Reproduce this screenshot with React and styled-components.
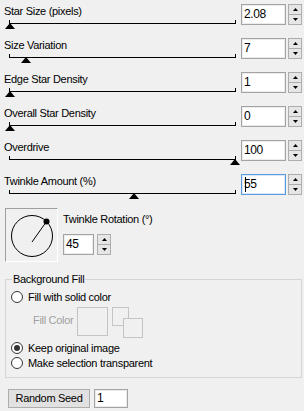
import React from 'react';
import styled, { createGlobalStyle } from 'styled-components';

const Global = createGlobalStyle`
  html, body { margin: 0; padding: 0; background: #f0f0f0; }
  body { font-family: "Liberation Sans", Arial, sans-serif; }
`;

const Page = styled.div`
  width: 304px;
  height: 411px;
  overflow: hidden;
  background: #f0f0f0;
  color: #000;
  font-family: "Liberation Sans", Arial, sans-serif;
  font-size: 11px;
  letter-spacing: -0.3px;
  display: flex;
  flex-direction: column;
`;

const Row = styled.div`
  display: flex;
  align-items: flex-start;
  height: 34px;
  padding-left: 4px;
`;

const SliderCol = styled.div`
  width: 233px;
  display: flex;
  flex-direction: column;
`;

const Label = styled.div`
  padding-top: 4px;
  height: 14px;
  line-height: 14px;
  white-space: nowrap;
`;

const Track = styled.div`
  position: relative;
  margin: 5px 0 0 5px;
  width: 227px;
  height: 1px;
  background: #000;
  &::before, &::after {
    content: '';
    position: absolute;
    bottom: 0;
    width: 1px;
    height: 4px;
    background: #000;
  }
  &::before { left: 0; }
  &::after { right: 0; }
`;

const Thumb = styled.div`
  position: absolute;
  top: 0;
  width: 0;
  height: 0;
  border-left: 5px solid transparent;
  border-right: 5px solid transparent;
  border-bottom: 6px solid #000;
`;

const SpinWrap = styled.div`
  display: flex;
  margin-left: ${p => p.$ml}px;
  margin-top: ${p => p.$mt}px;
  gap: ${p => p.$gap}px;
`;

const NumBox = styled.div`
  position: relative;
  box-sizing: border-box;
  width: ${p => p.$w}px;
  height: ${p => p.$h}px;
  background: #fff;
  border: 1px solid ${p => (p.$focus ? '#5a9be0' : '#a3a3a3')};
  box-shadow: inset 0 0 0 1px ${p => (p.$focus ? '#d6e8fa' : '#ececec')};
  padding-left: 2px;
  font-size: 12px;
  letter-spacing: -0.4px;
  line-height: ${p => p.$h - 2}px;
  white-space: nowrap;
`;

const Caret = styled.span`
  position: absolute;
  left: 3px;
  top: 2px;
  width: 1px;
  height: 15px;
  background: #000;
`;

const SpinButtons = styled.div`
  width: 14px;
  height: ${p => p.$h}px;
  display: flex;
  flex-direction: column;
`;

const SpinHalf = styled.div`
  flex: 1;
  box-sizing: border-box;
  background: #e6e6e6;
  border: 1px solid #adadad;
  display: flex;
  align-items: center;
  justify-content: center;
  & + & { margin-top: -1px; }
`;

const Arrow = ({ down }) => (
  <svg width="5" height="3" viewBox="0 0 5 3">
    <polygon points={down ? '0,0 5,0 2.5,3' : '2.5,0 5,3 0,3'} fill="#000" />
  </svg>
);

const Spinner = ({ value, w = 45, h = 21, ml = 4, mt = 4, gap = 2, focus }) => (
  <SpinWrap $ml={ml} $mt={mt} $gap={gap}>
    <NumBox $w={w} $h={h} $focus={focus}>
      {value}
      {focus && <Caret />}
    </NumBox>
    <SpinButtons $h={h}>
      <SpinHalf><Arrow /></SpinHalf>
      <SpinHalf><Arrow down /></SpinHalf>
    </SpinButtons>
  </SpinWrap>
);

const SliderRow = ({ label, value, pct, focus }) => (
  <Row>
    <SliderCol>
      <Label>{label}</Label>
      <Track>
        <Thumb style={{ left: `calc(1px + ${pct} * (100% - 2px) - 5px)` }} />
      </Track>
    </SliderCol>
    <Spinner value={value} focus={focus} />
  </Row>
);

const RotSection = styled.div`
  display: flex;
  gap: 5px;
  padding-left: 5px;
  margin-top: 4px;
`;

const Dial = styled.div`
  box-sizing: border-box;
  width: 53px;
  height: 54px;
  border-top: 1px solid #a0a0a0;
  border-left: 1px solid #a0a0a0;
  border-right: 1px solid #fff;
  border-bottom: 1px solid #fff;
  display: flex;
`;

const RotCol = styled.div`
  display: flex;
  flex-direction: column;
`;

const Group = styled.div`
  position: relative;
  box-sizing: border-box;
  margin: 17px 0 0 5px;
  width: 297px;
  height: 99px;
  border: 1px solid #d5d5d5;
  padding-top: 10px;
  display: flex;
  flex-direction: column;
`;

const Legend = styled.span`
  position: absolute;
  top: -8px;
  left: 6px;
  padding: 0 1px;
  background: #f0f0f0;
  line-height: 14px;
`;

const RadioRow = styled.div`
  display: flex;
  align-items: center;
  gap: 5px;
  height: 14px;
  padding-left: 5px;
  margin-top: ${p => p.$mt || 0}px;
  line-height: 14px;
  white-space: nowrap;
`;

const RadioCircle = styled.span`
  box-sizing: border-box;
  width: 12px;
  height: 12px;
  border-radius: 50%;
  border: 1px solid #333;
  background: #fff;
  display: flex;
  align-items: center;
  justify-content: center;
  &::after {
    content: '';
    width: 6px;
    height: 6px;
    border-radius: 50%;
    background: ${p => (p.$checked ? '#333' : 'transparent')};
  }
`;

const FillRow = styled.div`
  display: flex;
  align-items: flex-start;
  margin-top: 3px;
  padding-left: 27px;
  height: 30px;
`;

const FillLabel = styled.span`
  width: 44px;
  margin-top: 6px;
  line-height: 14px;
  color: #a0a0a0;
  white-space: nowrap;
`;

const Swatch = styled.div`
  box-sizing: border-box;
  width: 31px;
  height: 29px;
  border: 1px solid #c4c4c4;
`;

const SwapIcon = styled.svg`
  margin-left: 4px;
`;

const BottomRow = styled.div`
  display: flex;
  gap: 4px;
  margin-top: 11px;
  padding-left: 8px;
`;

const Button = styled.div`
  box-sizing: border-box;
  width: 82px;
  height: 19px;
  background: #e1e1e1;
  border: 1px solid #adadad;
  text-align: center;
  line-height: 17px;
  white-space: nowrap;
`;

const sliders = [
  { label: 'Star Size (pixels)', value: '2.08', pct: 0 },
  { label: 'Size Variation', value: '7', pct: 0.07 },
  { label: 'Edge Star Density', value: '1', pct: 0 },
  { label: 'Overall Star Density', value: '0', pct: 0 },
  { label: 'Overdrive', value: '100', pct: 1 },
  { label: 'Twinkle Amount (%)', value: '55', pct: 0.55, focus: true },
];

export default function App() {
  return (
    <Page>
      <Global />
      {sliders.map(s => (
        <SliderRow key={s.label} {...s} />
      ))}
      <RotSection>
        <Dial>
          <svg width="51" height="52" viewBox="0 0 51 52">
            <circle cx="26" cy="27" r="20.5" fill="none" stroke="#000" strokeWidth="1" />
            <line x1="26" y1="33" x2="40.5" y2="12.5" stroke="#000" strokeWidth="1" />
            <circle cx="40.5" cy="12.5" r="3" fill="#000" />
          </svg>
        </Dial>
        <RotCol>
          <Label>Twinkle Rotation (°)</Label>
          <Spinner value="45" w={31} ml={0} mt={8} gap={3} />
        </RotCol>
      </RotSection>
      <Group>
        <Legend>Background Fill</Legend>
        <RadioRow>
          <RadioCircle />
          Fill with solid color
        </RadioRow>
        <FillRow>
          <FillLabel>Fill Color</FillLabel>
          <Swatch />
          <SwapIcon width="31" height="31" viewBox="0 0 31 31">
            <rect x="0.5" y="0.5" width="16" height="18" fill="none" stroke="#c4c4c4" />
            <rect x="11.5" y="11.5" width="19" height="19" fill="#f0f0f0" stroke="#c4c4c4" />
          </SwapIcon>
        </FillRow>
        <RadioRow $mt={4}>
          <RadioCircle $checked />
          Keep original image
        </RadioRow>
        <RadioRow $mt={1}>
          <RadioCircle />
          Make selection transparent
        </RadioRow>
      </Group>
      <BottomRow>
        <Button>Random Seed</Button>
        <NumBox $w={34} $h={19}>1</NumBox>
      </BottomRow>
    </Page>
  );
}
